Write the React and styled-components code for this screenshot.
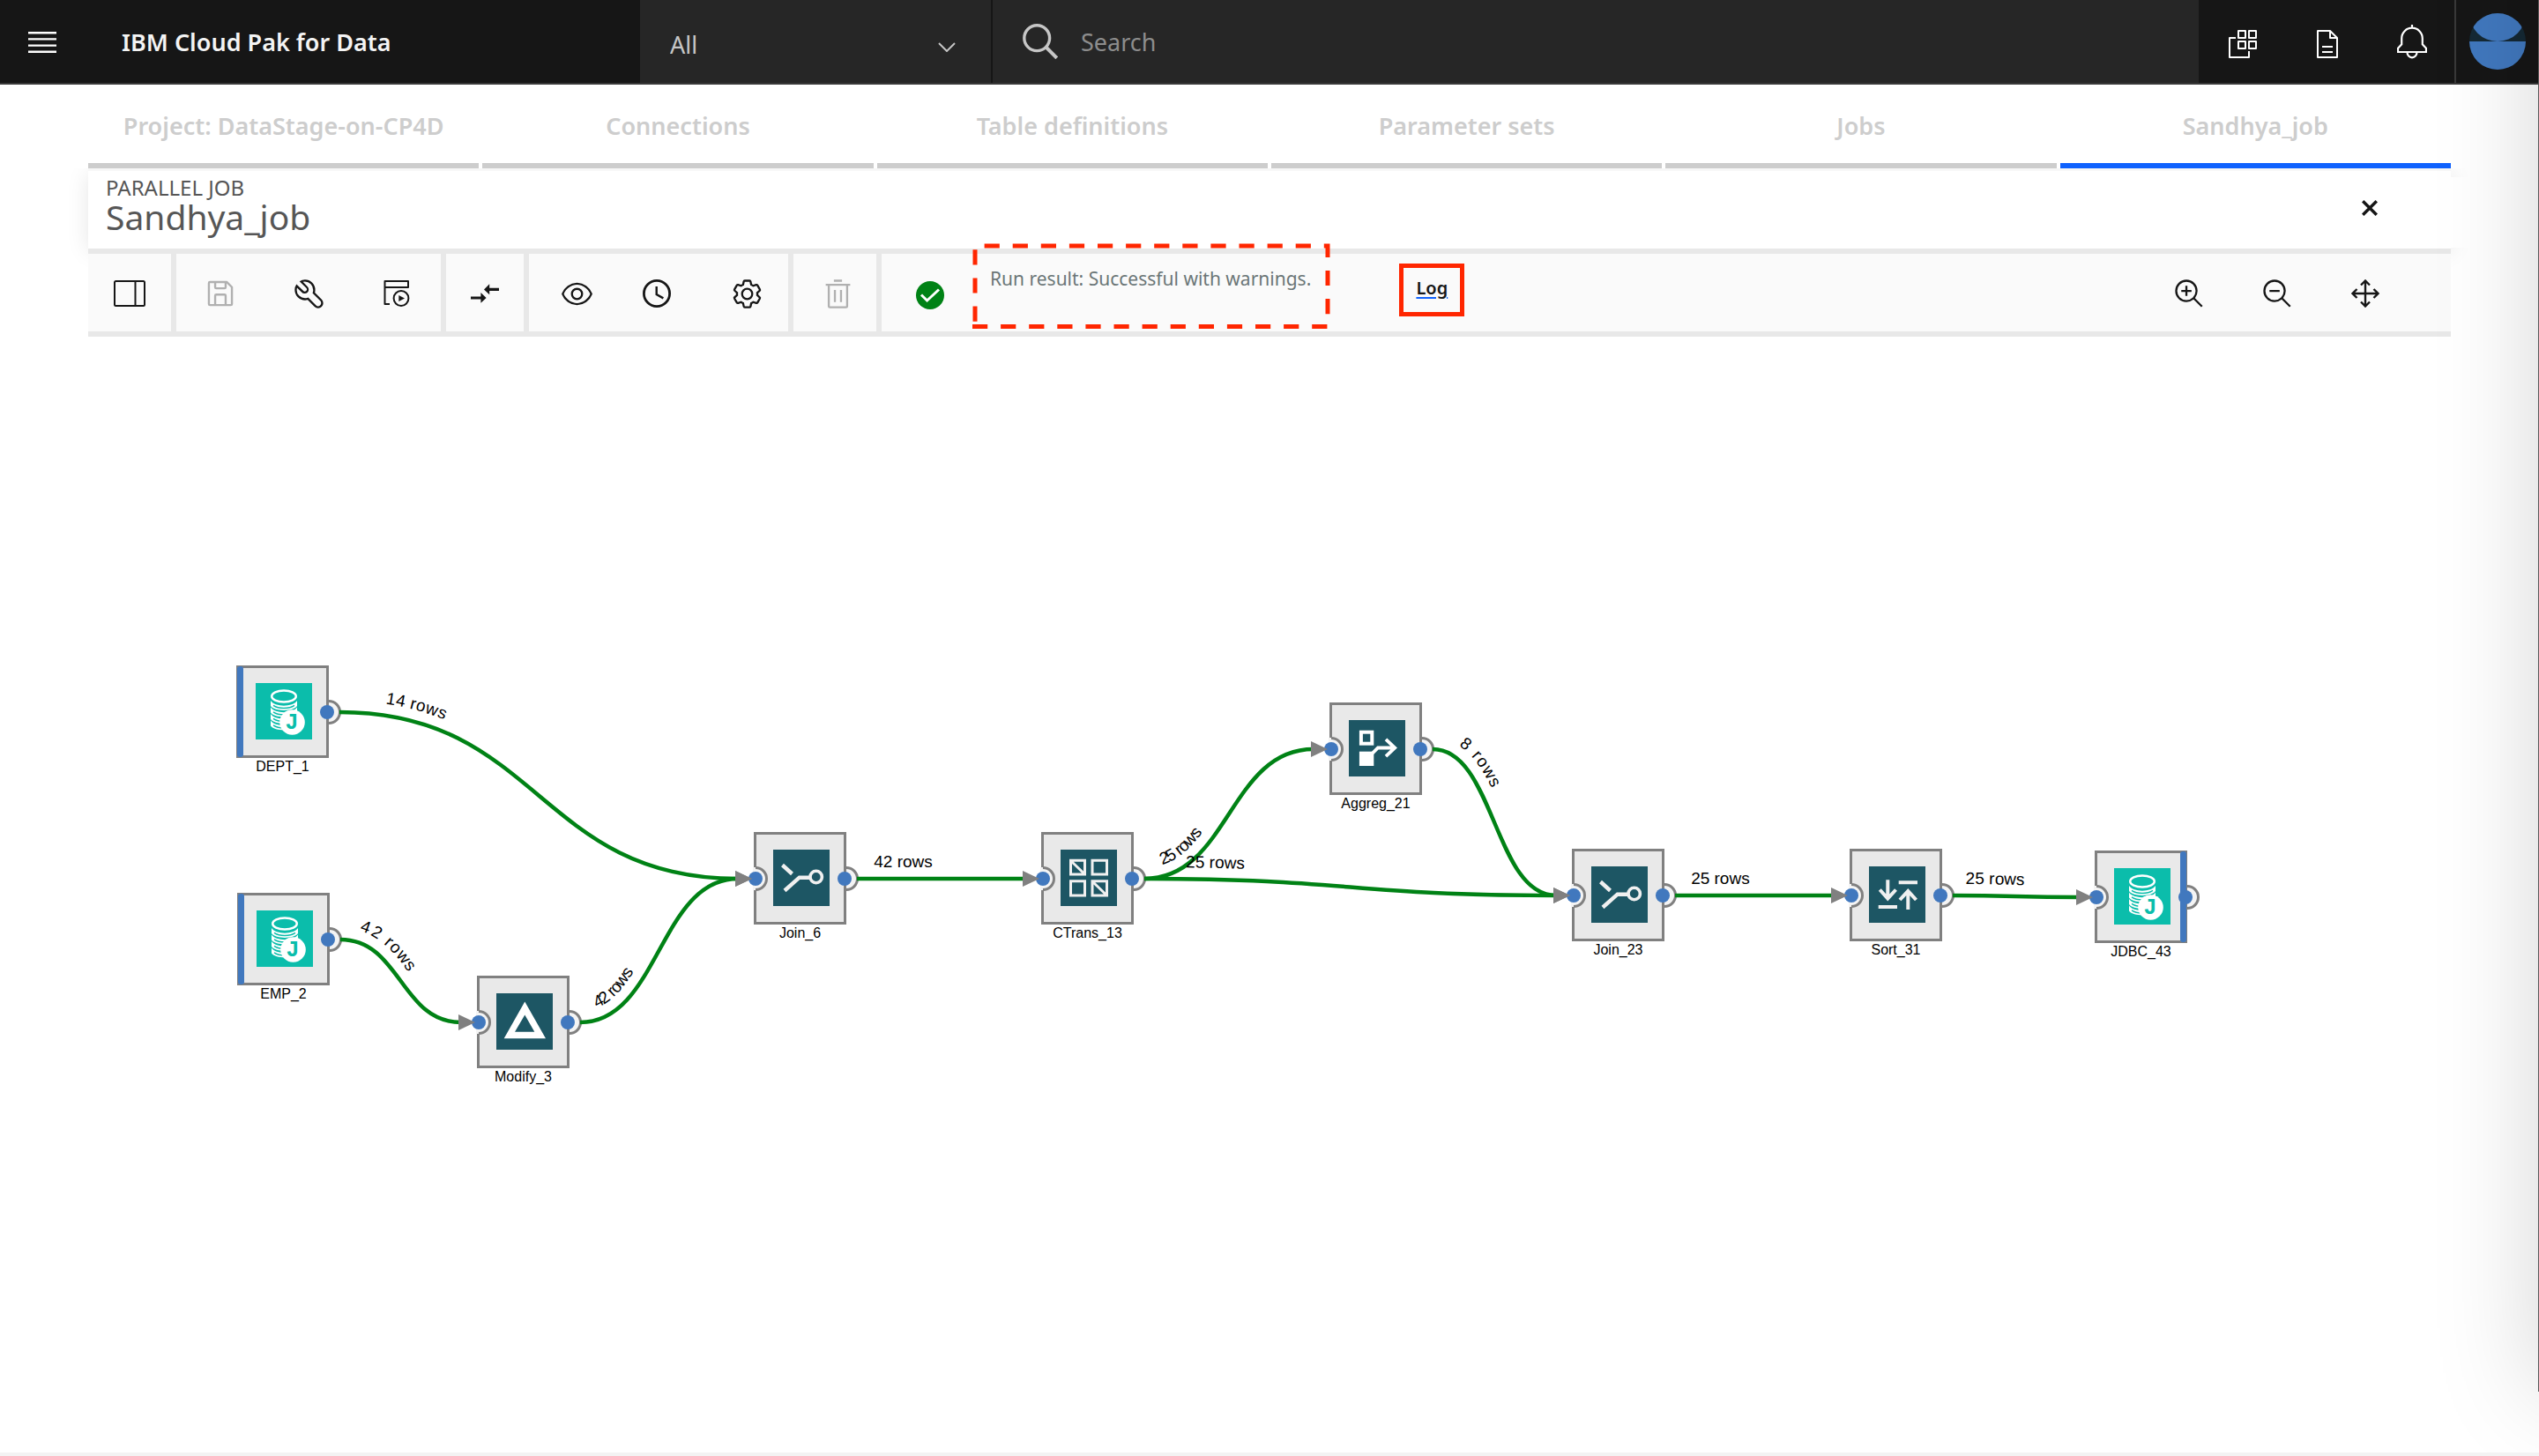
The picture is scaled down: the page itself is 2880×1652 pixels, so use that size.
import React from "react";
import styled, { createGlobalStyle } from "styled-components";

const GlobalStyle = createGlobalStyle`
  *, *::before, *::after { box-sizing: border-box; }
  body { margin: 0; }
`;

const sans = `"Noto Sans", "Open Sans", sans-serif`;
const GREEN = "#008215";
const BLUE = "#4178be";

/* ---------- shell ---------- */

const Page = styled.div`
  position: relative;
  display: flex;
  flex-direction: column;
  min-height: 100vh;
  overflow: hidden;
  background: #fff;
  border-bottom: 4px solid #f3f3f3;
  font-family: ${sans};
`;

const SidePanelEdge = styled.div`
  position: absolute;
  z-index: 5;
  top: -200px;
  bottom: 69px;
  left: calc(100% - 1px);
  width: 600px;
  background: #5a5a5a;
  box-shadow: 0 0 110px rgba(0, 0, 0, 0.17);
  pointer-events: none;
`;

/* ---------- header ---------- */

const Header = styled.header`
  display: flex;
  height: 96px;
  background: #262626;
  border-bottom: 2px solid #393939;
`;

const Brand = styled.div`
  display: flex;
  align-items: center;
  flex: 0 0 726px;
  padding-top: 2px;
  background: #161616;
`;

const BareButton = styled.button`
  display: flex;
  align-items: center;
  justify-content: center;
  margin: 0;
  padding: 0;
  border: 0;
  background: none;
  color: inherit;
  cursor: pointer;
`;

const MenuButton = styled(BareButton)`
  width: 96px;
  height: 100%;
`;

const BrandName = styled.h1`
  margin: 0;
  padding-left: 42px;
  font-size: 27px;
  font-weight: 600;
  line-height: 40px;
  color: #f4f4f4;
`;

const ScopeField = styled.label`
  position: relative;
  display: flex;
  flex: 0 0 400px;
  align-items: center;
  padding-top: 6px;
  border-right: 2px solid #161616;
  color: #c6c6c6;
`;

const ScopeSelect = styled.select`
  width: 100%;
  height: 64px;
  padding: 0 40px 0 34px;
  border: 0;
  appearance: none;
  background: transparent;
  color: inherit;
  font-family: inherit;
  font-size: 27px;
`;

const Chevron = styled.svg`
  position: absolute;
  top: 48px;
  right: 40px;
  pointer-events: none;
`;

const SearchField = styled.label`
  display: flex;
  flex: 1;
  align-items: center;
  gap: 26px;
  padding-left: 34px;
  color: #c6c6c6;
`;

const SearchInput = styled.input`
  flex: 1;
  min-width: 0;
  height: 64px;
  padding: 0;
  border: 0;
  outline: 0;
  background: transparent;
  color: #f4f4f4;
  font-family: inherit;
  font-size: 27px;
  &::placeholder { color: #8d8d8d; opacity: 1; }
`;

const HeaderActions = styled.nav`
  display: flex;
  padding: 6px 0 0 2px;
  background: #161616;
  color: #fff;
`;

const HeaderAction = styled(BareButton)`
  width: 96px;
`;

const AvatarButton = styled(BareButton)`
  width: 96px;
  background: #161616;
  border-left: 2px solid #393939;
`;

/* ---------- tabs ---------- */

const Workspace = styled.main`
  display: flex;
  flex-direction: column;
  flex: 1;
`;

const Frame = styled.div`
  padding: 0 100px;
`;

const Tabs = styled.nav`
  display: flex;
  gap: 4px;
`;

const Tab = styled.a`
  flex: 1 1 0;
  padding: 27px 0 22px;
  border-bottom: 6px solid ${(p) => (p.$active ? "#0f62fe" : "#cdcdcd")};
  color: #cdcdcd;
  font-size: 27px;
  font-weight: 600;
  line-height: 40px;
  text-align: center;
  text-decoration: none;
`;

/* ---------- job title ---------- */

const TitlePanel = styled.section`
  position: relative;
  display: flex;
  justify-content: space-between;
  padding: 6px 76px 16px 20px;
  margin-top: 3px;
  background: #fff;
  box-shadow: 0 3px 24px rgba(0, 0, 0, 0.1);
  color: #565656;
  clip-path: inset(-3px -30px -30px -30px);
  &::before {
    content: "";
    position: absolute;
    inset: -3px 0 auto;
    height: 3px;
    background: #f7f7f7;
  }
  &::after {
    content: "";
    position: absolute;
    top: 7px;
    bottom: 1px;
    left: 100%;
    width: 30px;
    background: #fff;
  }
`;

const JobKind = styled.div`
  font-size: 24px;
  line-height: 26px;
`;

const JobName = styled.h2`
  margin: 0;
  font-size: 39px;
  font-weight: 400;
  line-height: 40px;
`;

const CloseButton = styled(BareButton)`
  width: 32px;
  height: 72px;
  margin-bottom: -6px;
  color: #161616;
`;

/* ---------- toolbar ---------- */

const Toolbar = styled.div`
  position: relative;
  display: flex;
  height: 100px;
  background: #fafafa;
  border-top: 6px solid #e8e8e8;
  border-bottom: 6px solid #e8e8e8;
`;

const ToolGroup = styled.div`
  display: flex;
  gap: ${(p) => p.$gap || 0}px;
  padding: 2px 0 0 ${(p) => p.$lead || 0}px;
  border-right: 6px solid #e8e8e8;
`;

const ToolButton = styled(BareButton)`
  width: ${(p) => p.$w || 100}px;
  color: #161616;
  &:disabled { color: #b0b0b0; cursor: default; }
`;

const RunStatus = styled.div`
  display: flex;
  flex: 1;
  align-items: flex-start;
  padding-left: 39px;
`;

const StatusMark = styled.span`
  display: flex;
  align-items: center;
  height: 100%;
  padding-top: 6px;
  margin-right: 52px;
`;

const StatusText = styled.p`
  position: relative;
  margin: 12px 100px 0 0;
  color: #6b7677;
  font-size: 21px;
  line-height: 32px;
`;

const Callout = styled.svg`
  position: absolute;
  top: -24px;
  left: -20px;
  overflow: visible;
`;

const LogLink = styled.a`
  width: 74px;
  height: 60px;
  margin-top: 11px;
  padding-top: 7px;
  border: 5px solid #ff2600;
  color: #161616;
  font-size: 20px;
  font-weight: 600;
  line-height: 32px;
  text-align: center;
  text-decoration: underline #0f62fe 2px;
  text-underline-offset: 3px;
`;

const ViewTools = styled.div`
  display: flex;
  padding: 2px 47px 0 0;
`;

/* ---------- canvas ---------- */

const Canvas = styled.section`
  position: relative;
  flex: 1;
  min-height: 900px;
`;

const Links = styled.svg`
  position: absolute;
  z-index: 2;
  inset: 0;
  width: 100%;
  height: 100%;
`;

const LinkLabel = styled.text`
  font-family: "Liberation Sans", Arial, sans-serif;
  font-size: 19px;
  fill: #000;
`;

const Stage = styled.div`
  position: absolute;
  left: ${(p) => p.$x}px;
  top: ${(p) => p.$y}px;
  width: 105px;
`;

const StageBox = styled.div`
  display: flex;
  align-items: center;
  justify-content: center;
  height: 105px;
  padding: 0 0 2px 2px;
  border: 3px solid #808080;
  background: #e9e9e9;
`;

const StageBar = styled.span`
  position: absolute;
  top: 1px;
  ${(p) => p.$side}: 1px;
  width: 7px;
  height: 103px;
  border-radius: 3px;
  background: ${BLUE};
`;

const StageName = styled.div`
  margin: 0 -20px;
  font-family: "Liberation Sans", Arial, sans-serif;
  font-size: 16px;
  line-height: 20px;
  text-align: center;
  color: #000;
`;

const PortDrawing = styled.svg`
  position: absolute;
  top: 36px;
  ${(p) => (p.$side === "in" ? "left: -10px" : "right: -14px")};
`;

const PORT = 53;

function Port({ side }) {
  return (
    <PortDrawing $side={side} width="28" height="34" viewBox="0 0 28 34" aria-hidden="true">
      {side === "in" ? (
        <>
          <rect x="9" y="4" width="6" height="26" fill="#f4f4f4" />
          <path d="M11 4A13 13 0 0 1 11 30Z" fill="#f4f4f4" />
          <path d="M12 4.5A12.5 12.5 0 0 1 12 29.5" fill="none" stroke="#808080" strokeWidth="3" />
          <circle cx="12" cy="17" r="8" fill={BLUE} />
        </>
      ) : (
        <>
          <path d="M14 4.5A12.5 12.5 0 0 1 14 29.5Z" fill="#f4f4f4" />
          <path d="M14 4.5A12.5 12.5 0 0 1 14 29.5" fill="none" stroke="#808080" strokeWidth="3" />
          <circle cx="12" cy="17" r="8" fill={BLUE} />
        </>
      )}
    </PortDrawing>
  );
}

const JMark = styled.text`
  font-family: "Liberation Mono", monospace;
  font-size: 25px;
  font-weight: 700;
`;

const glyphs = {
  jdbc: (
    <>
      <rect width="64" height="64" fill="#0bbdab" />
      <ellipse cx="32" cy="15" rx="13.8" ry="6.5" fill="none" stroke="#fff" strokeWidth="2.4" />
      {[0, 7.5, 15, 22.5].map((d) => (
        <g key={d} transform={`translate(0 ${d})`}>
          <path d="M17 20C22 27.5 42 27.5 47 20V26C42 32.5 22 32.5 17 26Z" fill="#fff" />
          <path d="M20 25.4C26 29.5 38 29.5 44 25.4" fill="none" stroke="#0bbdab" strokeWidth="1.3" />
        </g>
      ))}
      <circle cx="41.5" cy="44.5" r="14.3" fill="#fff" />
      <JMark x="41" y="52" textAnchor="middle" fill="#0bbdab">J</JMark>
    </>
  ),
  modify: (
    <>
      <rect width="64" height="64" fill="#1d5664" />
      <path d="M32.3 9.6L56 51.3H8.7ZM32.3 24.4L21 43.7H43.3Z" fill="#fff" fillRule="evenodd" />
    </>
  ),
  join: (
    <>
      <rect width="64" height="64" fill="#1d5664" />
      <path d="M10.5 17.5L21.5 27.5M13 46.5L29.7 31.7H42" fill="none" stroke="#f0f0f0" strokeWidth="4.4" />
      <circle cx="48.7" cy="31" r="6.7" fill="none" stroke="#f0f0f0" strokeWidth="3.6" />
    </>
  ),
  trans: (
    <>
      <rect width="64" height="64" fill="#1d5664" />
      <path
        d="M11.5 12.2H27.5V28H11.5ZM36 12.2H52.5V28H36ZM11.5 35.8H27.5V52H11.5ZM36 35.8H52.5V52H36ZM12 13L27 27.5M37 37L52 51.5"
        fill="none"
        stroke="#f0f0f0"
        strokeWidth="3"
      />
    </>
  ),
  aggreg: (
    <>
      <rect width="64" height="64" fill="#1d5664" />
      <rect x="13.9" y="13.7" width="12.4" height="13" fill="none" stroke="#fff" strokeWidth="4" />
      <rect x="11.9" y="35.7" width="16.4" height="16.3" fill="#fff" />
      <path d="M25 39.5L33 31.5H52M42 21.8L52.2 31.5L42 41.2" fill="none" stroke="#fff" strokeWidth="3.8" />
    </>
  ),
  sort: (
    <>
      <rect width="64" height="64" fill="#1d5664" />
      <path
        d="M10.7 46H32M33.7 18.3H55M21.3 15.3V36M12.3 26.5L21.3 36.5L30.5 26.5M44.3 49V29M35 38L44.3 28L53.5 38"
        fill="none"
        stroke="#f0f0f0"
        strokeWidth="4"
      />
    </>
  ),
};

const stages = {
  dept: { x: 268, y: 373, name: "DEPT_1", glyph: "jdbc", bar: "left", out: true },
  emp: { x: 269, y: 631, name: "EMP_2", glyph: "jdbc", bar: "left", out: true },
  modify: { x: 541, y: 725, name: "Modify_3", glyph: "modify", in: true, out: true },
  join6: { x: 855, y: 562, name: "Join_6", glyph: "join", in: true, out: true },
  trans: { x: 1181, y: 562, name: "CTrans_13", glyph: "trans", in: true, out: true },
  aggreg: { x: 1508, y: 415, name: "Aggreg_21", glyph: "aggreg", in: true, out: true },
  join23: { x: 1783, y: 581, name: "Join_23", glyph: "join", in: true, out: true },
  sort: { x: 2098, y: 581, name: "Sort_31", glyph: "sort", in: true, out: true },
  jdbc: { x: 2376, y: 583, name: "JDBC_43", glyph: "jdbc", bar: "right", in: true, out: true },
};

const links = [
  ["dept", "join6", "14 rows"],
  ["emp", "modify", "42 rows"],
  ["modify", "join6", "42 rows"],
  ["join6", "trans", "42 rows"],
  ["trans", "aggreg", "25 rows"],
  ["trans", "join23", "25 rows"],
  ["aggreg", "join23", "8 rows"],
  ["join23", "sort", "25 rows"],
  ["sort", "jdbc", "25 rows"],
];

function Link({ from, to, label }) {
  const a = stages[from];
  const b = stages[to];
  const x1 = a.x + 117;
  const y1 = a.y + PORT;
  const x2 = b.x - 18;
  const y2 = b.y + PORT;
  const mid = (x1 + x2) / 2;
  const id = `link-${from}-${to}`;
  return (
    <g>
      <path id={id} d={`M${x1} ${y1}C${mid} ${y1} ${mid} ${y2} ${x2} ${y2}`} fill="none" stroke={GREEN} strokeWidth="4.5" />
      <path d={`M${x2 - 3} ${y2 - 9}L${x2 + 16} ${y2}L${x2 - 3} ${y2 + 9}Z`} fill="#808080" />
      <LinkLabel dy="-13">
        <textPath href={`#${id}`} startOffset="10%">{label}</textPath>
      </LinkLabel>
    </g>
  );
}

/* ---------- icons ---------- */

const Glyph = ({ d, size = 37 }) => (
  <svg width={size} height={size} viewBox="0 0 32 32" fill="currentColor" aria-hidden="true">
    <path d={d} />
  </svg>
);

const Line = ({ w, h, children, sw = 2 }) => (
  <svg width={w} height={h} viewBox={`0 0 ${w} ${h}`} fill="none" stroke="currentColor" strokeWidth={sw} aria-hidden="true">
    {children}
  </svg>
);

const SAVE = "M27.71,9.29l-5-5A1,1,0,0,0,22,4H6A2,2,0,0,0,4,6V26a2,2,0,0,0,2,2H26a2,2,0,0,0,2-2V10A1,1,0,0,0,27.71,9.29ZM12,6h8v4H12Zm8,20H12V18h8Zm2,0V18a2,2,0,0,0-2-2H12a2,2,0,0,0-2,2v8H6V6h4v4a2,2,0,0,0,2,2h8a2,2,0,0,0,2-2V6.41l4,4V26Z";
const WRENCH = "M12.1,2a9.8,9.8,0,0,0-5.4,1.6l6.4,6.4a2.1,2.1,0,0,1,.2,3,2.1,2.1,0,0,1-3-.2L3.7,6.4A9.84,9.84,0,0,0,2,12.1,10.14,10.14,0,0,0,12.1,22.2a10.9,10.9,0,0,0,2.6-.3l6.7,6.7a5,5,0,0,0,7.1-7.1l-6.7-6.7a10.9,10.9,0,0,0,.3-2.6A10,10,0,0,0,12.1,2Zm8,10.1a7.61,7.61,0,0,1-.3,2.1l-.3,1.1.8.8,6.7,6.7a2.88,2.88,0,0,1,.9,2.1A2.72,2.72,0,0,1,27,27a2.9,2.9,0,0,1-4.2,0l-6.7-6.7-.8-.8-1.1.3a7.61,7.61,0,0,1-2.1.3,8.27,8.27,0,0,1-5.7-2.3A7.63,7.63,0,0,1,4,12.1a8.33,8.33,0,0,1,.3-2.2l4.4,4.4a4.14,4.14,0,0,0,5.9.2,4.14,4.14,0,0,0-.2-5.9L10,4.2a6.45,6.45,0,0,1,2-.3,8.27,8.27,0,0,1,5.7,2.3A8.49,8.49,0,0,1,20.1,12.1Z";
const EYE = "M30.94,15.66A16.69,16.69,0,0,0,16,5,16.69,16.69,0,0,0,1.06,15.66a1,1,0,0,0,0,.68A16.69,16.69,0,0,0,16,27,16.69,16.69,0,0,0,30.94,16.34,1,1,0,0,0,30.94,15.66ZM16,25c-5.3,0-10.9-3.93-12.93-9C5.1,10.93,10.7,7,16,7s10.9,3.93,12.93,9C26.9,21.07,21.3,25,16,25ZM16,10a6,6,0,1,0,6,6A6,6,0,0,0,16,10Zm0,10a4,4,0,1,1,4-4A4,4,0,0,1,16,20Z";
const GEAR = "M27,16.76c0-.25,0-.5,0-.76s0-.51,0-.77l1.92-1.68A2,2,0,0,0,29.3,11L26.94,7a2,2,0,0,0-1.73-1,2,2,0,0,0-.64.1l-2.43.82a11.35,11.35,0,0,0-1.31-.75l-.51-2.52a2,2,0,0,0-2-1.61H13.64a2,2,0,0,0-2,1.61l-.51,2.52a11.48,11.48,0,0,0-1.32.75L7.43,6.06A2,2,0,0,0,6.79,6,2,2,0,0,0,5.06,7L2.7,11a2,2,0,0,0,.41,2.51L5,15.24c0,.25,0,.5,0,.76s0,.51,0,.77L3.11,18.45A2,2,0,0,0,2.7,21L5.06,25a2,2,0,0,0,1.73,1,2,2,0,0,0,.64-.1l2.43-.82a11.35,11.35,0,0,0,1.31.75l.51,2.52a2,2,0,0,0,2,1.61h4.72a2,2,0,0,0,2-1.61l.51-2.52a11.48,11.48,0,0,0,1.32-.75l2.42.82a2,2,0,0,0,.64.1,2,2,0,0,0,1.73-1L29.3,21a2,2,0,0,0-.41-2.51ZM25.21,24l-3.43-1.16a8.86,8.86,0,0,1-2.71,1.57L18.36,28H13.64l-.71-3.55a9.36,9.36,0,0,1-2.7-1.57L6.79,24,4.43,20l2.72-2.4a8.9,8.9,0,0,1,0-3.13L4.43,12,6.79,8l3.43,1.16a8.86,8.86,0,0,1,2.71-1.57L13.64,4h4.72l.71,3.55a9.36,9.36,0,0,1,2.7,1.57L25.21,8,27.57,12l-2.72,2.4a8.9,8.9,0,0,1,0,3.13L27.57,20ZM16,22a6,6,0,1,1,6-6A5.94,5.94,0,0,1,16,22Zm0-10a3.91,3.91,0,0,0-4,4,3.91,3.91,0,0,0,4,4,3.91,3.91,0,0,0,4-4A3.91,3.91,0,0,0,16,12Z";
const TRASH = "M12 12h2v12h-2zM18 12h2v12h-2zM4 6v2h2v20a2 2 0 002 2h16a2 2 0 002-2V8h2V6zM8 28V8h16v20zM12 2h8v2h-8z";
const LENS = "M21.45 20A10.88 10.88 0 0024 13 11 11 0 1013 24a10.88 10.88 0 007-2.55l7.6 7.55L29 27.59zM13 22a9 9 0 119-9 9 9 0 01-9 9z";
const ZOOM_IN = `M18 12H14V8H12V12H8V14H12V18H14V14H18Z${LENS}`;
const ZOOM_OUT = `M8 12H18V14H8Z${LENS}`;

const tabs = [
  "Project: DataStage-on-CP4D",
  "Connections",
  "Table definitions",
  "Parameter sets",
  "Jobs",
  "Sandhya_job",
];

export default function App() {
  return (
    <Page>
      <GlobalStyle />
      <Header>
        <Brand>
          <MenuButton aria-label="Menu">
            <svg width="32" height="24" viewBox="0 0 32 24" fill="#fff" aria-hidden="true">
              <path d="M0 0H32V2.4H0ZM0 7.2H32V9.6H0ZM0 14.4H32V16.8H0ZM0 21.6H32V24H0Z" />
            </svg>
          </MenuButton>
          <BrandName>IBM Cloud Pak for Data</BrandName>
        </Brand>
        <ScopeField>
          <ScopeSelect aria-label="Search scope" defaultValue="All">
            <option>All</option>
          </ScopeSelect>
          <Chevron width="20" height="11" viewBox="0 0 20 11" fill="none" stroke="currentColor" strokeWidth="2" aria-hidden="true">
            <path d="M1 1L10 10L19 1" />
          </Chevron>
        </ScopeField>
        <SearchField>
          <Line w={40} h={40} sw={3.4}>
            <circle cx="16.2" cy="16.2" r="14.4" />
            <path d="M26.5 26.5L38.8 38.8" strokeWidth="4" />
          </Line>
          <SearchInput type="search" placeholder="Search" aria-label="Search" />
        </SearchField>
        <HeaderActions>
          <HeaderAction aria-label="App switcher">
            <Line w={32} h={32}>
              <path d="M11 1H19V9H11ZM23 1H31V9H23ZM11 13H19V21H11ZM23 13H31V21H23ZM8 9H1V31H23V24" strokeLinejoin="round" />
            </Line>
          </HeaderAction>
          <HeaderAction aria-label="Documents">
            <Line w={24} h={32}>
              <path d="M1 1H15L23 9V31H1ZM15 1V9H23M6 19H18M6 25H18" strokeLinejoin="round" />
            </Line>
          </HeaderAction>
          <HeaderAction aria-label="Notifications">
            <Line w={34} h={44} sw={2.2}>
              <path d="M17 0V4M5.2 15.5A11.8 11.8 0 0 1 28.8 15.5V22.2L33 26.8V31H1V26.8L5.2 22.2ZM11.5 31.5A5.5 5.8 0 0 0 22.5 31.5" />
            </Line>
          </HeaderAction>
        </HeaderActions>
        <AvatarButton aria-label="Profile">
          <svg width="64" height="64" viewBox="0 0 64 64" aria-hidden="true">
            <defs>
              <clipPath id="avatar-clip">
                <circle cx="32" cy="32" r="32" />
              </clipPath>
            </defs>
            <g clipPath="url(#avatar-clip)">
              <rect width="64" height="64" fill="#152935" />
              <circle cx="32" cy="0" r="32" fill={BLUE} />
              <rect y="32" width="64" height="32" fill={BLUE} />
            </g>
          </svg>
        </AvatarButton>
      </Header>

      <Workspace>
        <Frame>
          <Tabs>
            {tabs.map((t, i) => (
              <Tab key={t} href="#" $active={i === tabs.length - 1}>{t}</Tab>
            ))}
          </Tabs>
          <TitlePanel>
            <div>
              <JobKind>PARALLEL JOB</JobKind>
              <JobName>Sandhya_job</JobName>
            </div>
            <CloseButton aria-label="Close">
              <Line w={18} h={18} sw={3.4}>
                <path d="M1.2 1.2L16.8 16.8M16.8 1.2L1.2 16.8" />
              </Line>
            </CloseButton>
          </TitlePanel>
          <Toolbar role="toolbar">
            <ToolGroup>
              <ToolButton $w={94} aria-label="Toggle palette">
                <Line w={36} h={30}>
                  <rect x="1" y="1" width="34" height="28" rx="1.5" />
                  <path d="M24.5 1V29" />
                </Line>
              </ToolButton>
            </ToolGroup>
            <ToolGroup>
              <ToolButton disabled aria-label="Save"><Glyph d={SAVE} size={38} /></ToolButton>
              <ToolButton aria-label="Compile"><Glyph d={WRENCH} /></ToolButton>
              <ToolButton aria-label="Run">
                <Line w={30} h={30}>
                  <path d="M7 27H1.5V1H28V8H1.5" strokeLinejoin="round" />
                  <circle cx="20" cy="20.5" r="8.4" />
                  <path d="M17.3 17L24 20.5L17.3 24Z" fill="currentColor" stroke="none" />
                </Line>
              </ToolButton>
            </ToolGroup>
            <ToolGroup>
              <ToolButton $w={88} aria-label="Compare">
                <svg width="32" height="22" viewBox="0 0 32 22" fill="currentColor" aria-hidden="true">
                  <path d="M0 14.4H11.4V10L17.6 15.9L11.4 21.8V17.5H0ZM32 8H21.2V12.2L15 6.4L21.2 0.2V4.8H32Z" />
                </svg>
              </ToolButton>
            </ToolGroup>
            <ToolGroup $gap={19} $lead={18}>
              <ToolButton $w={72} aria-label="View"><Glyph d={EYE} /></ToolButton>
              <ToolButton $w={72} aria-label="Schedule">
                <Line w={32} h={32} sw={2.8}>
                  <circle cx="16" cy="16" r="14.6" />
                  <path d="M15.7 8V17L23.4 21.4" strokeWidth="2.4" />
                </Line>
              </ToolButton>
              <ToolButton $w={94} aria-label="Settings"><Glyph d={GEAR} /></ToolButton>
            </ToolGroup>
            <ToolGroup $lead={6}>
              <ToolButton $w={88} disabled aria-label="Delete"><Glyph d={TRASH} /></ToolButton>
            </ToolGroup>
            <RunStatus>
              <StatusMark>
                <svg width="32" height="32" viewBox="0 0 32 32" aria-hidden="true">
                  <circle cx="16" cy="16" r="16" fill={GREEN} />
                  <path d="M6 15.5L12.6 22L26 9.5" fill="none" stroke="#fff" strokeWidth="3" />
                </svg>
              </StatusMark>
              <StatusText>
                Run result: Successful with warnings.
                <Callout width="406" height="98" viewBox="0 0 406 98" aria-hidden="true">
                  <path d="M0 94.5H403V3H3V95" fill="none" stroke="#ff2600" strokeWidth="5" strokeDasharray="17.2 14.9" />
                </Callout>
              </StatusText>
              <LogLink href="#">Log</LogLink>
            </RunStatus>
            <ViewTools>
              <ToolButton aria-label="Zoom in"><Glyph d={ZOOM_IN} /></ToolButton>
              <ToolButton aria-label="Zoom out"><Glyph d={ZOOM_OUT} /></ToolButton>
              <ToolButton aria-label="Fit to view">
                <Line w={32} h={32} sw={2.4}>
                  <path d="M16 1.5V30.5M1.5 16H30.5M11 6.5L16 1.5L21 6.5M11 25.5L16 30.5L21 25.5M6.5 11L1.5 16L6.5 21M25.5 11L30.5 16L25.5 21" />
                </Line>
              </ToolButton>
            </ViewTools>
          </Toolbar>
        </Frame>

        <Canvas>
          {Object.entries(stages).map(([key, s]) => (
            <Stage key={key} $x={s.x} $y={s.y}>
              <StageBox>
                <svg width="64" height="64" viewBox="0 0 64 64" aria-hidden="true">{glyphs[s.glyph]}</svg>
              </StageBox>
              {s.out && <Port side="out" />}
              {s.in && <Port side="in" />}
              {s.bar && <StageBar $side={s.bar} />}
              <StageName>{s.name}</StageName>
            </Stage>
          ))}
          <Links>
            {links.map(([from, to, label]) => (
              <Link key={from + to} from={from} to={to} label={label} />
            ))}
          </Links>
        </Canvas>
      </Workspace>
      <SidePanelEdge />
    </Page>
  );
}
